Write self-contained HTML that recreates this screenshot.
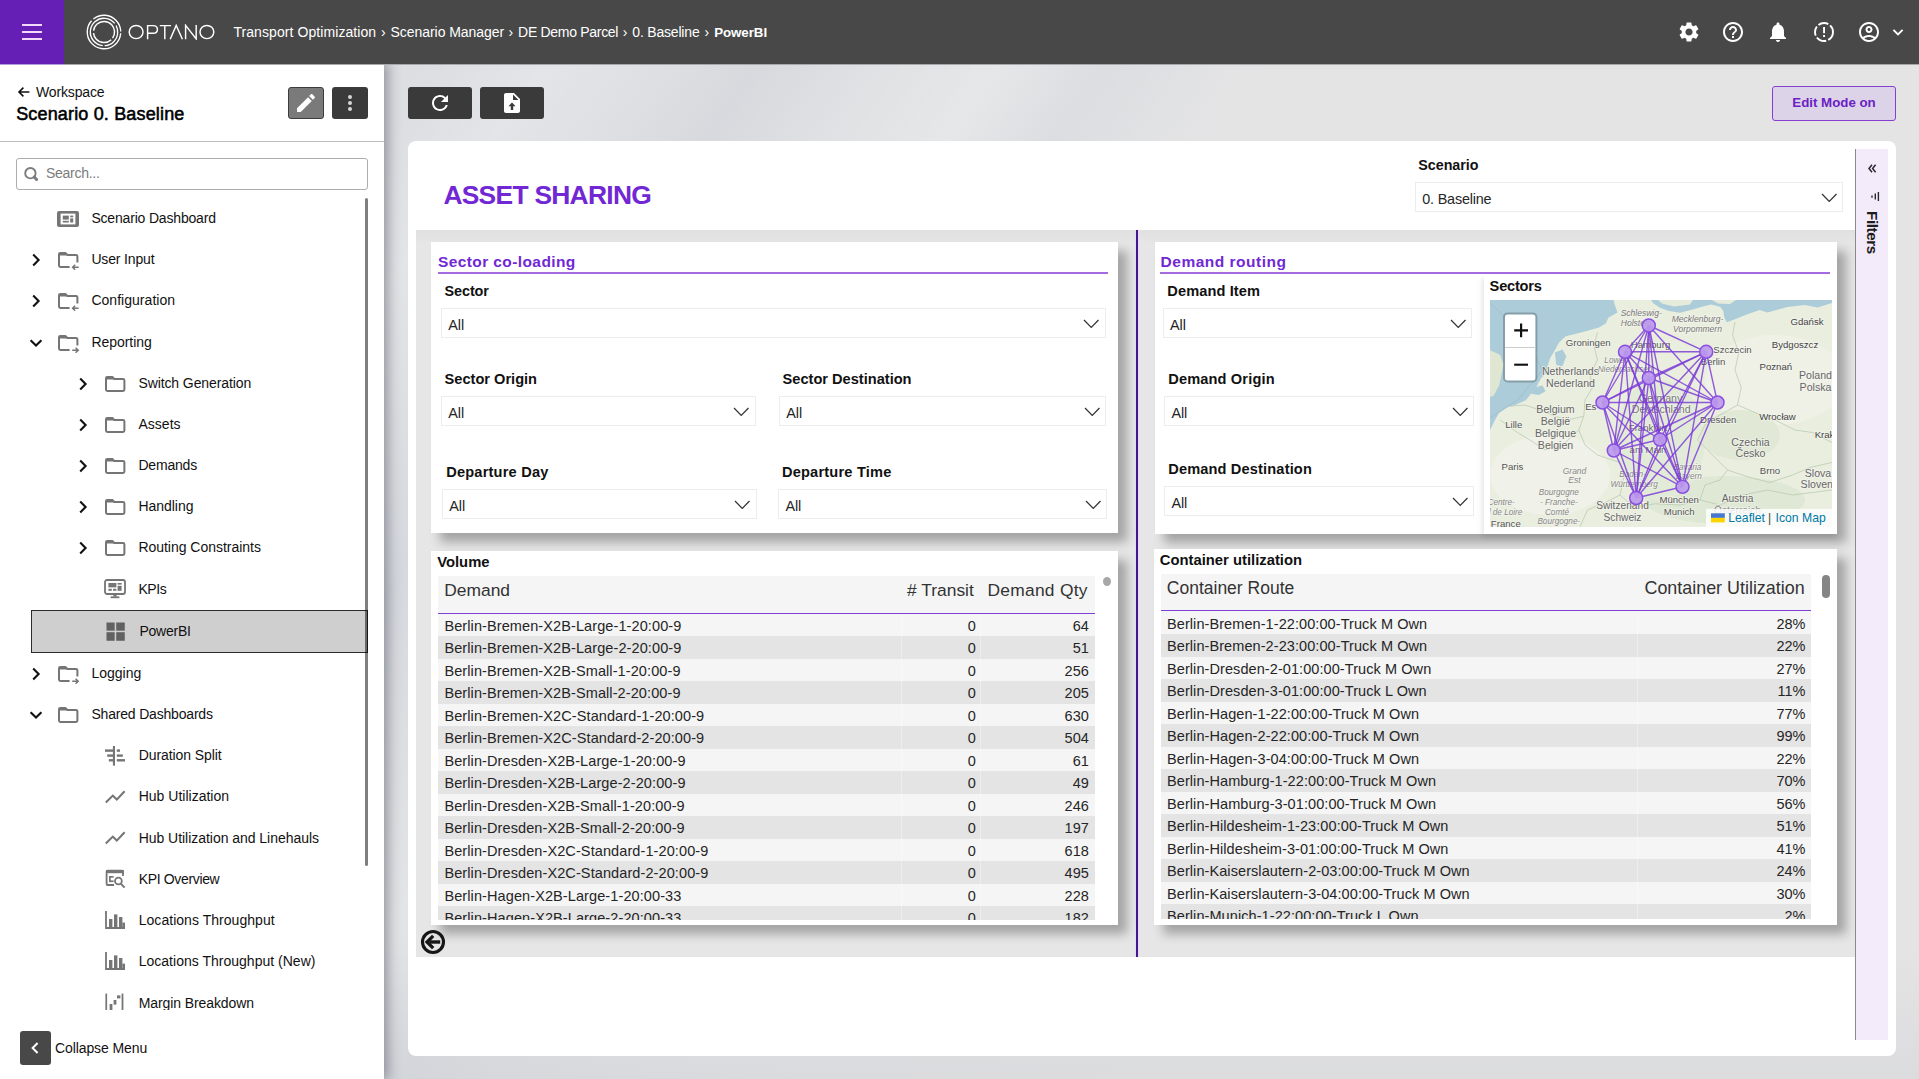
<!DOCTYPE html>
<html>
<head>
<meta charset="utf-8">
<title>OPTANO</title>
<style>
*{box-sizing:border-box;margin:0;padding:0}
html,body{width:1919px;height:1079px;overflow:hidden}
body{font-family:"Liberation Sans",sans-serif;position:relative;color:#000;background:linear-gradient(125deg,transparent 18%,rgba(255,255,255,.18) 22%,transparent 26%,rgba(200,205,212,.38) 30%,transparent 35%,rgba(255,255,255,.16) 39%,rgba(204,208,214,.3) 43%,transparent 48%,transparent 100%),linear-gradient(180deg,rgba(0,0,0,0) 0,rgba(0,0,0,0) 88%,rgba(120,125,140,.08) 100%),linear-gradient(100deg,#dcdee2 20%,#e1e2e4 42%,#e4e4e5 62%)}
.abs{position:absolute}
#topbar{left:0;top:0;width:1919px;height:64px;background:#484848}
#burger{left:0;top:0;width:64px;height:64px;background:#651fb5}
#burger i{position:absolute;left:22px;width:20px;height:2px;background:#f3d9ff}
#crumbs{left:233px;top:23px;font-size:14px;letter-spacing:.04px;color:#fff;white-space:nowrap;line-height:18px}
#sidebar{left:0;top:64px;width:384px;height:1015px;background:#fff;box-shadow:2px 0 12px 2px rgba(40,45,60,.42);clip-path:inset(0 -40px 0 0)}
#sbhead{left:0;top:0;width:384px;height:78px;border-bottom:1px solid #bdbdbd}
#tree{left:0;top:0;width:384px;height:1015px;font-size:14px;letter-spacing:-.1px;color:#111;white-space:nowrap}
#tree .t{line-height:18px}
#card{left:408px;top:141px;width:1488px;height:915px;background:#fff;border-radius:8px}
.btn{background:#3a3a3a;border-radius:3px}
.panel{background:#fff;box-shadow:9px 9px 10px rgba(0,0,0,.29)}
.ptitle{color:#7128d4;font-weight:700;font-size:15.5px;letter-spacing:.3px;white-space:nowrap;line-height:18px}
.lbl{font-weight:700;font-size:14.3px;color:#111;white-space:nowrap;line-height:18px}
.dd{border:1px solid #e8e8e8;background:#fff;font-size:14.6px;color:#222;height:30px;line-height:33px;padding-left:6.5px;white-space:nowrap}
.dd svg{position:absolute;right:6.5px;top:11px}
.tbl{font-size:14.5px;letter-spacing:.1px;color:#222;white-space:nowrap;overflow:hidden}
.tbl .r{position:absolute;left:0;height:22.5px;line-height:23px;width:100%}
.tbl .r span{position:absolute;top:0}
.tbl .h{position:absolute;left:0;top:0;width:100%;background:#f5f5f5;color:#333}
.tbl .h span{position:absolute;white-space:nowrap}
</style>
</head>
<body>

<!-- TOPBAR -->
<div id="topbar" class="abs"></div>
<div id="burger" class="abs"><i style="top:24px"></i><i style="top:31px"></i><i style="top:38px"></i></div>
<svg class="abs" style="left:83.9px;top:11.900px" width="40" height="40" viewBox="0 0 40 40" fill="none" stroke="#fff" stroke-width="1.350">
<circle cx="20" cy="20" r="16.750" stroke-dasharray="63.250 2.500 36.950 2.500" transform="rotate(4.300 20 20)"/>
<circle cx="20" cy="20" r="13.700" stroke-dasharray="53.700 2.500 27.400 2.500" transform="rotate(95.200 20 20)"/>
<circle cx="20" cy="20" r="10.550" stroke-width="1.450" stroke-dasharray="23.300 2.500 38 2.500" transform="rotate(46.800 20 20)"/>
</svg>
<svg class="abs" style="left:128px;top:24px" width="88" height="16" viewBox="0 0 88 16" fill="none" stroke="#fff" stroke-width="1.450">
<ellipse cx="8.100" cy="8" rx="6.900" ry="6.600"/>
<path d="M19.600 15.200 V1.600 H25 Q29.400 1.600 29.400 5.400 Q29.400 9.200 25 9.200 H19.600"/>
<path d="M31.800 1.600 H43 M36.800 1.600 V15.200"/>
<path d="M42.200 15.200 L48.200 1.400 L54.400 15.200"/>
<path d="M57.600 15.200 V1.400 L68.200 14.900 V0.900"/>
<ellipse cx="78.900" cy="8" rx="6.900" ry="6.600"/>
</svg>
<div id="crumbs" class="abs"><span class="abs" style="left:0.4px;top:0;letter-spacing:0.08px;">Transport Optimization</span><span class="abs" style="left:148.0px;top:0;letter-spacing:0px;">›</span><span class="abs" style="left:157.6px;top:0;letter-spacing:-0.06px;">Scenario Manager</span><span class="abs" style="left:275.5px;top:0;letter-spacing:0px;">›</span><span class="abs" style="left:285.1px;top:0;letter-spacing:-0.3px;">DE Demo Parcel</span><span class="abs" style="left:389.7px;top:0;letter-spacing:0px;">›</span><span class="abs" style="left:399.3px;top:0;letter-spacing:-0.19px;">0. Baseline</span><span class="abs" style="left:471.6px;top:0;letter-spacing:0px;">›</span><span class="abs" style="left:481.2px;top:0;letter-spacing:-0.05px;font-weight:700;font-size:13.3px;top:.5px">PowerBI</span></div>

<!-- SIDEBAR -->
<div id="sidebar" class="abs">
  <div id="sbhead" class="abs"></div>
  <svg class="abs" style="left:17px;top:22px" width="14" height="12" viewBox="0 0 14 12"><path d="M12.4 6 H2.4 M6.4 1.6 L2 6 L6.4 10.4" fill="none" stroke="#111" stroke-width="1.6"/></svg>
  <div class="abs" style="left:36px;top:19px;font-size:14px;letter-spacing:-.15px;line-height:18px;color:#111">Workspace</div>
  <div class="abs" style="left:16.2px;top:39px;font-size:18px;font-weight:400;letter-spacing:.16px;-webkit-text-stroke:.55px #000;line-height:22px;color:#000;white-space:nowrap">Scenario 0. Baseline</div>
  <div class="abs" style="left:288px;top:23px;width:36px;height:32px;background:#7a7a7a;border:1px solid #3c3c3c;border-radius:3px"></div>
  <svg class="abs" style="left:294px;top:27px" width="24" height="24" viewBox="0 0 24 24"><path fill="#fff" d="M3 17.25V21h3.75L17.81 9.94l-3.75-3.75L3 17.25zM20.71 7.04c.39-.39.39-1.02 0-1.41l-2.34-2.34c-.39-.39-1.02-.39-1.41 0l-1.83 1.83 3.75 3.75 1.83-1.83z"/></svg>
  <div class="abs btn" style="left:332px;top:23px;width:36px;height:32px"></div>
  <svg class="abs" style="left:338px;top:27px" width="24" height="24" viewBox="0 0 24 24"><circle cx="12" cy="6" r="2" fill="#d6d6d6"/><circle cx="12" cy="12" r="2" fill="#d6d6d6"/><circle cx="12" cy="18" r="2" fill="#d6d6d6"/></svg>
  <div class="abs" style="left:16px;top:94px;width:352px;height:32px;border:1px solid #adadad;border-radius:3px"></div>
  <svg class="abs" style="left:23px;top:102px" width="17" height="17" viewBox="0 0 17 17"><circle cx="7.4" cy="7.2" r="5.2" fill="none" stroke="#7c7c7c" stroke-width="1.9"/><path d="M11.2 11 L13.6 13.5" stroke="#7c7c7c" stroke-width="3" stroke-linecap="round"/></svg>
  <div class="abs" style="left:46px;top:100px;font-size:14px;letter-spacing:-.28px;color:#7b7b7b;line-height:18px">Search...</div>
  <div class="abs" style="left:365px;top:134px;width:3px;height:668px;background:rgba(0,0,0,.5);border-radius:1.5px;z-index:5"></div>
  <div id="tree" class="abs">
<div class="abs" style="left:31px;top:546px;width:337px;height:43px;background:#cfcfcf;border:1px solid #2c2c2c"></div>
<svg class="abs" style="left:57px;top:146.5px" width="22" height="16" viewBox="0 0 22 16"><rect x="0" y="0" width="22" height="16" rx="2" fill="#757575"/><rect x="3.6" y="2.6" width="14.8" height="10.8" fill="#fff"/><rect x="5.8" y="4.6" width="6" height="4" fill="#757575"/><rect x="5.8" y="9.8" width="6" height="1.7" fill="#757575"/><rect x="13.2" y="4.6" width="3" height="1.7" fill="#757575"/><rect x="13.2" y="7.4" width="3" height="4.1" fill="#757575"/></svg>
<div class="abs t" style="left:91.4px;top:145.15px;letter-spacing:-0.18px">Scenario Dashboard</div>
<svg class="abs" style="left:30px;top:188.0px" width="12" height="16" viewBox="0 0 12 16"><path d="M3.2 2.6 L8.6 8 L3.2 13.4" fill="none" stroke="#111" stroke-width="2.1"/></svg>
<svg class="abs" style="left:58px;top:187.0px" width="22" height="19" viewBox="0 0 22 19"><path d="M11.6 16 H2.4 Q1 16 1 14.6 V3.3 Q1 2 2.3 2 H7.4 L9.4 3.9 H18 Q19.4 3.9 19.4 5.3 V11.4" fill="none" stroke="#757575" stroke-width="2" stroke-linejoin="round"/><path d="M1 2.4 H7.8 L9.6 4.4 H1Z" fill="#757575"/><path d="M20.6 16.2 H14.8 M17.2 13.700 L14.600 16.2 L17.2 18.700" fill="none" stroke="#757575" stroke-width="1.5"/></svg>
<div class="abs t" style="left:91.4px;top:186.15px;letter-spacing:-0.149px">User Input</div>
<svg class="abs" style="left:30px;top:229.10000000000002px" width="12" height="16" viewBox="0 0 12 16"><path d="M3.2 2.6 L8.6 8 L3.2 13.4" fill="none" stroke="#111" stroke-width="2.1"/></svg>
<svg class="abs" style="left:58px;top:228.10000000000002px" width="22" height="19" viewBox="0 0 22 19"><path d="M11.6 16 H2.4 Q1 16 1 14.6 V3.3 Q1 2 2.3 2 H7.4 L9.4 3.9 H18 Q19.4 3.9 19.4 5.3 V11.4" fill="none" stroke="#757575" stroke-width="2" stroke-linejoin="round"/><path d="M1 2.4 H7.8 L9.6 4.4 H1Z" fill="#757575"/><path d="M20.6 16.2 H14.8 M17.2 13.700 L14.600 16.2 L17.2 18.700" fill="none" stroke="#757575" stroke-width="1.5"/></svg>
<div class="abs t" style="left:91.4px;top:227.15px;letter-spacing:0.032px">Configuration</div>
<svg class="abs" style="left:28px;top:272.5px" width="16" height="12" viewBox="0 0 16 12"><path d="M2.6 3.2 L8 8.6 L13.4 3.2" fill="none" stroke="#111" stroke-width="2.1"/></svg>
<svg class="abs" style="left:58px;top:269.5px" width="22" height="19" viewBox="0 0 22 19"><path d="M11.6 16 H2.4 Q1 16 1 14.6 V3.3 Q1 2 2.3 2 H7.4 L9.4 3.9 H18 Q19.4 3.9 19.4 5.3 V11.4" fill="none" stroke="#757575" stroke-width="2" stroke-linejoin="round"/><path d="M1 2.4 H7.8 L9.6 4.4 H1Z" fill="#757575"/><path d="M14.2 16.2 H20 M17.600 13.700 L20.2 16.2 L17.600 18.700" fill="none" stroke="#757575" stroke-width="1.5"/></svg>
<div class="abs t" style="left:91.4px;top:268.55px;letter-spacing:-0.034px">Reporting</div>
<svg class="abs" style="left:77px;top:311.5px" width="12" height="16" viewBox="0 0 12 16"><path d="M3.2 2.6 L8.6 8 L3.2 13.4" fill="none" stroke="#111" stroke-width="2.1"/></svg>
<svg class="abs" style="left:105px;top:310.5px" width="22" height="19" viewBox="0 0 22 19"><path d="M1 3.3 Q1 2 2.3 2 H7.4 L9.4 3.9 H18 Q19.4 3.9 19.4 5.3 V14.6 Q19.4 16 18 16 H2.4 Q1 16 1 14.6 Z" fill="none" stroke="#757575" stroke-width="2" stroke-linejoin="round"/><path d="M1 2.4 H7.8 L9.6 4.4 H1Z" fill="#757575"/></svg>
<div class="abs t" style="left:138.4px;top:309.75px;letter-spacing:-0.094px">Switch Generation</div>
<svg class="abs" style="left:77px;top:352.5px" width="12" height="16" viewBox="0 0 12 16"><path d="M3.2 2.6 L8.6 8 L3.2 13.4" fill="none" stroke="#111" stroke-width="2.1"/></svg>
<svg class="abs" style="left:105px;top:351.5px" width="22" height="19" viewBox="0 0 22 19"><path d="M1 3.3 Q1 2 2.3 2 H7.4 L9.4 3.9 H18 Q19.4 3.9 19.4 5.3 V14.6 Q19.4 16 18 16 H2.4 Q1 16 1 14.6 Z" fill="none" stroke="#757575" stroke-width="2" stroke-linejoin="round"/><path d="M1 2.4 H7.8 L9.6 4.4 H1Z" fill="#757575"/></svg>
<div class="abs t" style="left:138.4px;top:350.95px;letter-spacing:0.031px">Assets</div>
<svg class="abs" style="left:77px;top:393.5px" width="12" height="16" viewBox="0 0 12 16"><path d="M3.2 2.6 L8.6 8 L3.2 13.4" fill="none" stroke="#111" stroke-width="2.1"/></svg>
<svg class="abs" style="left:105px;top:392.5px" width="22" height="19" viewBox="0 0 22 19"><path d="M1 3.3 Q1 2 2.3 2 H7.4 L9.4 3.9 H18 Q19.4 3.9 19.4 5.3 V14.6 Q19.4 16 18 16 H2.4 Q1 16 1 14.6 Z" fill="none" stroke="#757575" stroke-width="2" stroke-linejoin="round"/><path d="M1 2.4 H7.8 L9.6 4.4 H1Z" fill="#757575"/></svg>
<div class="abs t" style="left:138.4px;top:392.15px;letter-spacing:-0.189px">Demands</div>
<svg class="abs" style="left:77px;top:434.5px" width="12" height="16" viewBox="0 0 12 16"><path d="M3.2 2.6 L8.6 8 L3.2 13.4" fill="none" stroke="#111" stroke-width="2.1"/></svg>
<svg class="abs" style="left:105px;top:433.5px" width="22" height="19" viewBox="0 0 22 19"><path d="M1 3.3 Q1 2 2.3 2 H7.4 L9.4 3.9 H18 Q19.4 3.9 19.4 5.3 V14.6 Q19.4 16 18 16 H2.4 Q1 16 1 14.6 Z" fill="none" stroke="#757575" stroke-width="2" stroke-linejoin="round"/><path d="M1 2.4 H7.8 L9.6 4.4 H1Z" fill="#757575"/></svg>
<div class="abs t" style="left:138.4px;top:433.25px;letter-spacing:-0.033px">Handling</div>
<svg class="abs" style="left:77px;top:475.5px" width="12" height="16" viewBox="0 0 12 16"><path d="M3.2 2.6 L8.6 8 L3.2 13.4" fill="none" stroke="#111" stroke-width="2.1"/></svg>
<svg class="abs" style="left:105px;top:474.5px" width="22" height="19" viewBox="0 0 22 19"><path d="M1 3.3 Q1 2 2.3 2 H7.4 L9.4 3.9 H18 Q19.4 3.9 19.4 5.3 V14.6 Q19.4 16 18 16 H2.4 Q1 16 1 14.6 Z" fill="none" stroke="#757575" stroke-width="2" stroke-linejoin="round"/><path d="M1 2.4 H7.8 L9.6 4.4 H1Z" fill="#757575"/></svg>
<div class="abs t" style="left:138.4px;top:474.35px;letter-spacing:-0.024px">Routing Constraints</div>
<svg class="abs" style="left:104px;top:515px" width="22" height="20" viewBox="0 0 22 20"><rect x="1" y="1" width="20" height="14" rx="2" fill="none" stroke="#757575" stroke-width="1.8"/><rect x="4.4" y="4" width="8" height="4.4" fill="#757575"/><rect x="13.6" y="4" width="4" height="1.6" fill="#757575"/><rect x="13.6" y="6.8" width="4" height="5" fill="#757575"/><rect x="4.4" y="9.8" width="3.4" height="2" fill="#757575"/><rect x="9" y="9.8" width="3.4" height="2" fill="#757575"/><rect x="9.4" y="15" width="3.2" height="2.6" fill="#757575"/><rect x="6.6" y="17.4" width="8.8" height="1.8" fill="#757575"/></svg>
<div class="abs t" style="left:138.4px;top:515.75px;letter-spacing:-0.37px">KPIs</div>
<svg class="abs" style="left:105.9px;top:557.8px" width="19.4" height="19.4" viewBox="0 0 19 19"><rect x="0.5" y="0.5" width="8" height="8" fill="#616161"/><rect x="10" y="0.5" width="8.4" height="8" fill="#616161"/><rect x="0.5" y="10" width="8" height="8.4" fill="#616161"/><rect x="10" y="10" width="8.4" height="8.4" fill="#616161"/></svg>
<div class="abs t" style="left:139.5px;top:557.95px;letter-spacing:-0.26px">PowerBI</div>
<svg class="abs" style="left:30px;top:601.5px" width="12" height="16" viewBox="0 0 12 16"><path d="M3.2 2.6 L8.6 8 L3.2 13.4" fill="none" stroke="#111" stroke-width="2.1"/></svg>
<svg class="abs" style="left:58px;top:600.5px" width="22" height="19" viewBox="0 0 22 19"><path d="M11.6 16 H2.4 Q1 16 1 14.6 V3.3 Q1 2 2.3 2 H7.4 L9.4 3.9 H18 Q19.4 3.9 19.4 5.3 V11.4" fill="none" stroke="#757575" stroke-width="2" stroke-linejoin="round"/><path d="M1 2.4 H7.8 L9.6 4.4 H1Z" fill="#757575"/><path d="M14.2 16.2 H20 M17.600 13.700 L20.2 16.2 L17.600 18.700" fill="none" stroke="#757575" stroke-width="1.5"/></svg>
<div class="abs t" style="left:91.4px;top:599.65px;letter-spacing:-0.004px">Logging</div>
<svg class="abs" style="left:28px;top:644.5px" width="16" height="12" viewBox="0 0 16 12"><path d="M2.6 3.2 L8 8.6 L13.4 3.2" fill="none" stroke="#111" stroke-width="2.1"/></svg>
<svg class="abs" style="left:58px;top:641.5px" width="22" height="19" viewBox="0 0 22 19"><path d="M1 3.3 Q1 2 2.3 2 H7.4 L9.4 3.9 H18 Q19.4 3.9 19.4 5.3 V14.6 Q19.4 16 18 16 H2.4 Q1 16 1 14.6 Z" fill="none" stroke="#757575" stroke-width="2" stroke-linejoin="round"/><path d="M1 2.4 H7.8 L9.6 4.4 H1Z" fill="#757575"/></svg>
<div class="abs t" style="left:91.4px;top:640.85px;letter-spacing:-0.184px">Shared Dashboards</div>
<svg class="abs" style="left:105px;top:681.8px" width="21" height="20" viewBox="0 0 21 20"><rect x="7.9" y="0" width="2.1" height="19.6" fill="#757575"/><rect x="0" y="3.4" width="8" height="2.4" fill="#757575"/><rect x="11.8" y="3.4" width="3.2" height="2.4" fill="#757575"/><rect x="2.2" y="8.4" width="6" height="2.4" fill="#757575"/><rect x="11.8" y="8.4" width="6" height="2.4" fill="#757575"/><rect x="3.8" y="13.1" width="4.400" height="2.4" fill="#757575"/><rect x="11.8" y="13.1" width="8.2" height="2.4" fill="#757575"/></svg>
<div class="abs t" style="left:138.7px;top:681.95px;letter-spacing:-0.082px">Duration Split</div>
<svg class="abs" style="left:105px;top:726px" width="21" height="14" viewBox="0 0 21 14"><path d="M0.8 12.4 L7.8 5.6 L11.8 9.6 L19.6 1.2" fill="none" stroke="#757575" stroke-width="2.1"/></svg>
<div class="abs t" style="left:138.7px;top:723.45px;letter-spacing:0.009px">Hub Utilization</div>
<svg class="abs" style="left:105px;top:767px" width="21" height="14" viewBox="0 0 21 14"><path d="M0.8 12.4 L7.8 5.6 L11.8 9.6 L19.6 1.2" fill="none" stroke="#757575" stroke-width="2.1"/></svg>
<div class="abs t" style="left:138.7px;top:764.75px;letter-spacing:-0.036px">Hub Utilization and Linehauls</div>
<svg class="abs" style="left:105px;top:805px" width="21" height="20" viewBox="0 0 21 20"><path d="M18 7 V2.6 Q18 1.6 17 1.6 H2.6 Q1.6 1.6 1.6 2.6 V15 Q1.6 16 2.6 16 H9" fill="none" stroke="#757575" stroke-width="1.8"/><rect x="1" y="1" width="17.8" height="3.2" fill="#757575"/><rect x="4" y="7" width="4.6" height="1.7" fill="#757575"/><rect x="4" y="11.4" width="4.6" height="1.7" fill="#757575"/><rect x="4" y="7" width="1.7" height="6" fill="#757575"/><circle cx="13.4" cy="12" r="3.4" fill="none" stroke="#757575" stroke-width="1.8"/><path d="M15.8 14.6 L19.6 18.6" stroke="#757575" stroke-width="2"/></svg>
<div class="abs t" style="left:138.7px;top:805.95px;letter-spacing:-0.343px">KPI Overview</div>
<svg class="abs" style="left:105px;top:846px" width="21" height="20" viewBox="0 0 21 20"><path d="M1 1 V18 H20" fill="none" stroke="#757575" stroke-width="1.8"/><rect x="4" y="9" width="3.4" height="8.4" fill="#757575"/><rect x="9" y="4.4" width="3.4" height="13" fill="#757575"/><rect x="14" y="7" width="3.4" height="10.4" fill="#757575"/><rect x="17.4" y="12.6" width="2.6" height="5" fill="#757575"/></svg>
<div class="abs t" style="left:138.7px;top:847.15px;letter-spacing:0.041px">Locations Throughput</div>
<svg class="abs" style="left:105px;top:887px" width="21" height="20" viewBox="0 0 21 20"><path d="M1 1 V18 H20" fill="none" stroke="#757575" stroke-width="1.8"/><rect x="4" y="9" width="3.4" height="8.4" fill="#757575"/><rect x="9" y="4.4" width="3.4" height="13" fill="#757575"/><rect x="14" y="7" width="3.4" height="10.4" fill="#757575"/><rect x="17.4" y="12.6" width="2.6" height="5" fill="#757575"/></svg>
<div class="abs t" style="left:138.7px;top:888.45px;letter-spacing:0.015px">Locations Throughput (New)</div>
<svg class="abs" style="left:105px;top:929px" width="20" height="20" viewBox="0 0 20 20"><rect x="0.4" y="0.6" width="1.7" height="19" fill="#757575"/><rect x="16.6" y="0.6" width="1.8" height="19" fill="#757575"/><rect x="4.6" y="11" width="2.8" height="7" fill="#757575"/><rect x="8.6" y="7" width="2.8" height="4.6" fill="#757575"/><rect x="12" y="2.4" width="3.4" height="3" fill="#757575"/></svg>
<div class="abs t" style="left:138.7px;top:929.75px;letter-spacing:-0.09px">Margin Breakdown</div>
  </div>
  <div class="abs" style="left:0;top:945.5px;width:384px;height:70px;background:#fff"></div>
  <div class="abs" style="left:20px;top:967px;width:31px;height:34px;background:#484848;border-radius:3px"></div>
  <svg class="abs" style="left:29px;top:976px" width="12" height="16" viewBox="0 0 12 16"><path d="M8.6 3 L3.6 8 L8.6 13" fill="none" stroke="#fff" stroke-width="2"/></svg>
  <div class="abs" style="left:55px;top:975px;font-size:14px;letter-spacing:-.1px;line-height:18px;color:#111">Collapse Menu</div>
</div>

<!-- TOPBAR RIGHT ICONS -->
<svg class="abs" style="left:1677px;top:20px" width="24" height="24" viewBox="0 0 24 24"><path fill="#fff" d="M19.14 12.94c.04-.3.06-.61.06-.94 0-.32-.02-.64-.07-.94l2.03-1.58a.49.49 0 0 0 .12-.61l-1.92-3.32a.488.488 0 0 0-.59-.22l-2.39.96c-.5-.38-1.03-.7-1.62-.94l-.36-2.54a.484.484 0 0 0-.48-.41h-3.84c-.24 0-.43.17-.47.41l-.36 2.54c-.59.24-1.13.57-1.62.94l-2.39-.96c-.22-.08-.47 0-.59.22L2.74 8.87c-.12.21-.08.47.12.61l2.03 1.58c-.05.3-.09.63-.09.94s.02.64.07.94l-2.03 1.58a.49.49 0 0 0-.12.61l1.92 3.32c.12.22.37.29.59.22l2.39-.96c.5.38 1.03.7 1.62.94l.36 2.54c.05.24.24.41.48.41h3.84c.24 0 .44-.17.47-.41l.36-2.54c.59-.24 1.13-.56 1.62-.94l2.39.96c.22.08.47 0 .59-.22l1.92-3.32c.12-.22.07-.47-.12-.61l-2.01-1.58zM12 15.6c-1.98 0-3.6-1.62-3.6-3.600s1.62-3.600 3.600-3.600 3.600 1.620 3.600 3.600-1.620 3.600-3.600 3.600z"/></svg>
<svg class="abs" style="left:1721px;top:20px" width="24" height="24" viewBox="0 0 24 24"><path fill="#fff" d="M11 18h2v-2h-2v2zm1-16C6.480 2 2 6.480 2 12s4.480 10 10 10 10-4.480 10-10S17.520 2 12 2zm0 18c-4.410 0-8-3.590-8-8s3.590-8 8-8 8 3.590 8 8-3.590 8-8 8zm0-14c-2.210 0-4 1.790-4 4h2c0-1.100.9-2 2-2s2 .9 2 2c0 2-3 1.750-3 5h2c0-2.250 3-2.500 3-5 0-2.210-1.790-4-4-4z"/></svg>
<svg class="abs" style="left:1766px;top:20px" width="24" height="24" viewBox="0 0 24 24"><path fill="#fff" d="M12 22c1.100 0 2-.9 2-2h-4c0 1.100.89 2 2 2zm6-6v-5c0-3.070-1.640-5.640-4.500-6.320V4c0-.83-.67-1.500-1.500-1.500s-1.500.67-1.500 1.500v.68C7.630 5.360 6 7.920 6 11v5l-2 2v1h16v-1l-2-2z"/></svg>
<svg class="abs" style="left:1812px;top:20px" width="24" height="24" viewBox="0 0 24 24"><circle cx="12" cy="12" r="9" fill="none" stroke="#fff" stroke-width="1.9" stroke-dasharray="9.6 2.2 10.4 2.2 9.6 2.2 10.4 2.2 8 0"/><rect x="11.1" y="7" width="1.9" height="6.2" fill="#fff"/><rect x="11.1" y="15" width="1.9" height="2" fill="#fff"/></svg>
<svg class="abs" style="left:1857px;top:20px" width="24" height="24" viewBox="0 0 24 24"><path fill="#fff" d="M12 2C6.480 2 2 6.480 2 12s4.480 10 10 10 10-4.480 10-10S17.520 2 12 2zM7.350 18.500C8.660 17.560 10.260 17 12 17s3.340.56 4.650 1.500C15.340 19.440 13.740 20 12 20s-3.340-.56-4.650-1.500zm10.790-1.380C16.450 15.800 14.320 15 12 15s-4.450.8-6.140 2.120C4.700 15.730 4 13.950 4 12c0-4.420 3.580-8 8-8s8 3.580 8 8c0 1.950-.7 3.730-1.860 5.120zM12 6c-1.930 0-3.500 1.570-3.500 3.500S10.070 13 12 13s3.500-1.570 3.500-3.500S13.930 6 12 6zm0 5c-.83 0-1.500-.67-1.500-1.500S11.170 8 12 8s1.500.67 1.500 1.500S12.830 11 12 11z"/></svg>
<svg class="abs" style="left:1892px;top:28px" width="12" height="9" viewBox="0 0 12 9"><path d="M1.400 1.800 L6 6.400 L10.600 1.800" fill="none" stroke="#fff" stroke-width="1.9"/></svg>

<!-- MAIN TOOLBAR -->
<div class="abs btn" style="left:408px;top:87px;width:64px;height:32px"></div>
<svg class="abs" style="left:428px;top:91px" width="24" height="24" viewBox="0 0 24 24"><path fill="#fff" d="M17.650 6.350A7.958 7.958 0 0 0 12 4c-4.420 0-7.990 3.580-7.990 8s3.570 8 7.990 8c3.730 0 6.840-2.550 7.730-6h-2.080A5.990 5.990 0 0 1 12 18c-3.310 0-6-2.690-6-6s2.690-6 6-6c1.660 0 3.140.69 4.220 1.780L13 11h7V4l-2.350 2.350z"/></svg>
<div class="abs btn" style="left:480px;top:87px;width:64px;height:32px"></div>
<svg class="abs" style="left:500px;top:91px" width="24" height="24" viewBox="0 0 24 24"><path fill="#fff" d="M14 2H6c-1.100 0-1.990.9-1.990 2L4 20c0 1.100.89 2 1.990 2H18c1.100 0 2-.9 2-2V8l-6-6zm-1 7V3.500L18.500 9H13z"/><path fill="#3a3a3a" d="M12 11.500 L8.400 15.200 H10.800 V19 H13.200 V15.200 H15.600 Z"/></svg>
<div class="abs" style="left:1772px;top:86px;width:124px;height:35px;background:#ddd3e8;border:1.500px solid #8540d0;border-radius:3px"></div>
<div class="abs" style="left:1772px;top:94px;width:124px;text-align:center;font-size:13.300px;font-weight:700;color:#6a22c4;line-height:18px">Edit Mode on</div>

<!-- CARD -->
<div id="card" class="abs"></div>

<!-- TOPLINE --><div class="abs" style="left:64px;top:64px;width:1855px;height:1px;background:#a8a8ac;z-index:9"></div><div class="abs" style="left:0;top:64px;width:64px;height:1px;background:#b39bd6;z-index:9"></div>

<!-- REPORT A -->
<div class="abs" style="left:443.4px;top:177.75px;font-size:26.4px;font-weight:700;color:#7128d4;line-height:34px;letter-spacing:-0.72px;white-space:nowrap;">ASSET SHARING</div>
<div class="abs" style="left:1418.2px;top:155.55px;font-size:14.3px;font-weight:700;color:#111;line-height:19px;letter-spacing:0px;white-space:nowrap;">Scenario</div>
<div class="abs" style="left:1415.3px;top:181.9px;width:427.7px;height:30px;border:1px solid #ededed;background:#fff"></div>
<div class="abs" style="left:1422.3px;top:190.11px;font-size:14.4px;font-weight:400;color:#252525;line-height:19px;letter-spacing:-0.2px;white-space:nowrap;">0. Baseline</div>
<svg class="abs" style="left:1820.5px;top:192.9px" width="16.5" height="9.4" viewBox="-1 -1 16.5 9.4"><path d="M0 0 L7.25 7.4 L14.5 0" fill="none" stroke="#333" stroke-width="1.25"/></svg>
<div class="abs" style="left:416.2px;top:230.4px;width:1438.8px;height:726.6px;background:linear-gradient(#e0e0e0,#e6e6e6 14px,#e6e6e6)"></div>
<div class="abs" style="left:1135px;top:230.4px;width:4px;height:726.4px;background:#e6daf4"></div>
<div class="abs" style="left:1136px;top:230px;width:2px;height:727px;background:#47148f"></div>
<div class="abs" style="left:1855px;top:149px;width:33px;height:891px;background:#f3eafa;border-left:1px solid #8a8a8a"></div>
<svg class="abs" style="left:1868px;top:163.500px" width="9" height="9" viewBox="0 0 9 9"><path d="M4 0.800 L1 4.500 L4 8.200 M7.600 0.800 L4.600 4.500 L7.600 8.200" fill="none" stroke="#2a2a2a" stroke-width="1.500"/></svg>
<svg class="abs" style="left:1867px;top:191px" width="13" height="11" viewBox="0 0 13 11"><path d="M11.400 0.900 V10.100 M8.300 2.600 V8.600 M5 4.600 V6.800" fill="none" stroke="#2a2a2a" stroke-width="1.400"/></svg>
<div class="abs" style="left:1881px;top:211px;font-size:15.2px;font-weight:700;color:#1d1d1d;line-height:17px;transform:rotate(90deg);transform-origin:0 0;white-space:nowrap;letter-spacing:-.4px">Filters</div>
<div class="abs panel" style="left:431px;top:242px;width:687px;height:291px"></div>
<div class="abs" style="left:438px;top:251.53px;font-size:15.5px;font-weight:700;color:#7128d4;line-height:20px;letter-spacing:0.4px;white-space:nowrap;">Sector co-loading</div>
<div class="abs" style="left:438px;top:271.8px;width:670px;height:2px;background:#a56be0"></div>
<div class="abs" style="left:444.6px;top:282.01px;font-size:14.4px;font-weight:700;color:#111;line-height:19px;letter-spacing:-0.1px;white-space:nowrap;">Sector</div>
<div class="abs" style="left:441.3px;top:308px;width:664.3px;height:30px;border:1px solid #ededed;background:#fff"></div>
<div class="abs" style="left:448.3px;top:315.51px;font-size:14.4px;font-weight:400;color:#252525;line-height:19px;letter-spacing:-0.05px;white-space:nowrap;">All</div>
<svg class="abs" style="left:1083.1px;top:319px" width="16.5" height="9.4" viewBox="-1 -1 16.5 9.4"><path d="M0 0 L7.25 7.4 L14.5 0" fill="none" stroke="#333" stroke-width="1.25"/></svg>
<div class="abs" style="left:444.6px;top:370.14px;font-size:14.6px;font-weight:700;color:#111;line-height:19px;letter-spacing:0px;white-space:nowrap;">Sector Origin</div>
<div class="abs" style="left:441.3px;top:395.6px;width:314.6px;height:30px;border:1px solid #ededed;background:#fff"></div>
<div class="abs" style="left:448.3px;top:404.01px;font-size:14.4px;font-weight:400;color:#252525;line-height:19px;letter-spacing:-0.05px;white-space:nowrap;">All</div>
<svg class="abs" style="left:733.4000000000001px;top:406.6px" width="16.5" height="9.4" viewBox="-1 -1 16.5 9.4"><path d="M0 0 L7.25 7.4 L14.5 0" fill="none" stroke="#333" stroke-width="1.25"/></svg>
<div class="abs" style="left:782.6px;top:370.14px;font-size:14.6px;font-weight:700;color:#111;line-height:19px;letter-spacing:0px;white-space:nowrap;">Sector Destination</div>
<div class="abs" style="left:779.3px;top:395.6px;width:327.2px;height:30px;border:1px solid #ededed;background:#fff"></div>
<div class="abs" style="left:786.3px;top:404.01px;font-size:14.4px;font-weight:400;color:#252525;line-height:19px;letter-spacing:-0.05px;white-space:nowrap;">All</div>
<svg class="abs" style="left:1084.0px;top:406.6px" width="16.5" height="9.4" viewBox="-1 -1 16.5 9.4"><path d="M0 0 L7.25 7.4 L14.5 0" fill="none" stroke="#333" stroke-width="1.25"/></svg>
<div class="abs" style="left:446.2px;top:462.74px;font-size:14.6px;font-weight:700;color:#111;line-height:19px;letter-spacing:0.2px;white-space:nowrap;">Departure Day</div>
<div class="abs" style="left:442.2px;top:489px;width:314.6px;height:30px;border:1px solid #ededed;background:#fff"></div>
<div class="abs" style="left:449.2px;top:496.51px;font-size:14.4px;font-weight:400;color:#252525;line-height:19px;letter-spacing:-0.05px;white-space:nowrap;">All</div>
<svg class="abs" style="left:734.3px;top:500px" width="16.5" height="9.4" viewBox="-1 -1 16.5 9.4"><path d="M0 0 L7.25 7.4 L14.5 0" fill="none" stroke="#333" stroke-width="1.25"/></svg>
<div class="abs" style="left:781.9px;top:462.74px;font-size:14.6px;font-weight:700;color:#111;line-height:19px;letter-spacing:0.2px;white-space:nowrap;">Departure Time</div>
<div class="abs" style="left:778.4px;top:489px;width:329px;height:30px;border:1px solid #ededed;background:#fff"></div>
<div class="abs" style="left:785.4px;top:496.51px;font-size:14.4px;font-weight:400;color:#252525;line-height:19px;letter-spacing:-0.05px;white-space:nowrap;">All</div>
<svg class="abs" style="left:1084.9px;top:500px" width="16.5" height="9.4" viewBox="-1 -1 16.5 9.4"><path d="M0 0 L7.25 7.4 L14.5 0" fill="none" stroke="#333" stroke-width="1.25"/></svg>
<div class="abs panel" style="left:1155px;top:242px;width:682px;height:291.5px"></div>
<div class="abs" style="left:1160.6px;top:251.53px;font-size:15.5px;font-weight:700;color:#7128d4;line-height:20px;letter-spacing:0.5px;white-space:nowrap;">Demand routing</div>
<div class="abs" style="left:1160px;top:271.8px;width:670px;height:2px;background:#a56be0"></div>
<div class="abs" style="left:1167.3px;top:281.94px;font-size:14.6px;font-weight:700;color:#111;line-height:19px;letter-spacing:0.1px;white-space:nowrap;">Demand Item</div>
<div class="abs" style="left:1163px;top:308px;width:309px;height:30px;border:1px solid #ededed;background:#fff"></div>
<div class="abs" style="left:1170px;top:315.51px;font-size:14.4px;font-weight:400;color:#252525;line-height:19px;letter-spacing:-0.05px;white-space:nowrap;">All</div>
<svg class="abs" style="left:1449.5px;top:319px" width="16.5" height="9.4" viewBox="-1 -1 16.5 9.4"><path d="M0 0 L7.25 7.4 L14.5 0" fill="none" stroke="#333" stroke-width="1.25"/></svg>
<div class="abs" style="left:1168.2px;top:370.14px;font-size:14.6px;font-weight:700;color:#111;line-height:19px;letter-spacing:0.15px;white-space:nowrap;">Demand Origin</div>
<div class="abs" style="left:1164.4px;top:395.6px;width:309.6px;height:30px;border:1px solid #ededed;background:#fff"></div>
<div class="abs" style="left:1171.4px;top:404.01px;font-size:14.4px;font-weight:400;color:#252525;line-height:19px;letter-spacing:-0.05px;white-space:nowrap;">All</div>
<svg class="abs" style="left:1451.5px;top:406.6px" width="16.5" height="9.4" viewBox="-1 -1 16.5 9.4"><path d="M0 0 L7.25 7.4 L14.5 0" fill="none" stroke="#333" stroke-width="1.25"/></svg>
<div class="abs" style="left:1168.2px;top:460.04px;font-size:14.6px;font-weight:700;color:#111;line-height:19px;letter-spacing:0.15px;white-space:nowrap;">Demand Destination</div>
<div class="abs" style="left:1164.4px;top:486.2px;width:309.6px;height:30px;border:1px solid #ededed;background:#fff"></div>
<div class="abs" style="left:1171.4px;top:494.01px;font-size:14.4px;font-weight:400;color:#252525;line-height:19px;letter-spacing:-0.05px;white-space:nowrap;">All</div>
<svg class="abs" style="left:1451.5px;top:497.2px" width="16.5" height="9.4" viewBox="-1 -1 16.5 9.4"><path d="M0 0 L7.25 7.4 L14.5 0" fill="none" stroke="#333" stroke-width="1.25"/></svg>

<!-- MAP -->
<div class="abs" style="left:1484px;top:275px;width:353px;height:258.5px;background:#fff;box-shadow:-2px 3px 5px rgba(0,0,0,.10)"></div>
<div class="abs" style="left:1489.6px;top:276.74px;font-size:14.6px;font-weight:700;line-height:19px;color:#111;letter-spacing:-.2px">Sectors</div>
<svg class="abs" style="left:1490px;top:300px" width="342" height="227" viewBox="0 0 342 227" font-family="Liberation Sans, sans-serif"><rect width="342" height="227" fill="#eaeedf"/><ellipse cx="285" cy="80" rx="70" ry="45" fill="#f0f1e6"/><ellipse cx="60" cy="175" rx="60" ry="40" fill="#f0f1e8"/><ellipse cx="235" cy="200" rx="80" ry="24" fill="#dfe8d5"/><ellipse cx="170" cy="140" rx="45" ry="60" fill="#e2ead8"/><ellipse cx="250" cy="135" rx="40" ry="25" fill="#e1e9d6"/><polygon points="0.0,0.0 123.5,0.0 124.8,4.8 127.5,12.5 118.5,17.5 115.8,23.5 109.0,27.5 95.8,31.2 87.0,33.5 75.8,36.2 69.0,42.5 64.8,50.2 60.2,58.0 58.0,64.8 55.8,73.5 51.2,78.0 47.0,85.8 41.2,93.5 35.8,100.2 25.8,104.8 18.0,107.0 9.0,113.0 5.0,120.0 0.0,130.0" fill="#abccd8"/><polygon points="0.0,50.2 10.2,54.8 13.5,64.8 11.2,75.8 9.0,85.8 3.5,95.8 0.0,97.0" fill="#dfe7d3"/><polygon points="65.0,52.5 72.5,49.5 76.2,56.2 72.5,66.2 66.2,65.0" fill="#abccd8"/><polygon points="43.8,87.5 52.5,85.5 55.5,91.2 48.8,95.0 41.2,93.8" fill="#abccd8"/><polygon points="161,0 163.3,3.3 170,7.8 178.9,11.1 190,12.8 201,10 212,6.7 221,4.4 230,6.7 233.3,11.1 234.4,17.8 236.7,22.2 245.6,18.9 256.7,14.4 269.8,10 277.5,12.5 297.5,7 315,5 327.5,7.5 342,3 342,0" fill="#abccd8"/><polygon points="168,0 203,0 200,4.5 184,6.5 172,3.5" fill="#e6ebdc"/><polygon points="222,0 246,0 240,4 228,3.5" fill="#e6ebdc"/><polyline points="107.5,32.5 103.8,45.0 107.5,60.0 100.0,75.0 102.5,87.5 95.0,100.0 93.8,116.2 88.8,130.0 95.0,145.0 107.5,155.0 130.0,162.5 133.8,177.5 130.0,195.0 140.0,203.8" fill="none" stroke="#b5c6ae" stroke-width="0.7"/><polyline points="245.0,22.0 242.5,35.0 248.8,52.5 245.0,70.0 251.2,87.5 247.5,105.0 230.0,115.0 215.0,125.0 207.5,140.0 222.5,155.0 237.5,170.0 230.0,180.0 215.0,185.0 210.0,200.0 190.0,205.0 165.0,203.8 150.0,206.2 140.0,203.8" fill="none" stroke="#b5c6ae" stroke-width="0.7"/><polyline points="247.5,105.0 265.0,112.5 285.0,120.0 305.0,130.0 322.5,132.5 342.0,142.5" fill="none" stroke="#b5c6ae" stroke-width="0.7"/><polyline points="237.5,170.0 260.0,177.5 280.0,182.5 302.5,175.0 320.0,167.5 342.0,162.5" fill="none" stroke="#b5c6ae" stroke-width="0.7"/><polyline points="93.8,116.2 77.5,120.0 65.0,116.2 50.0,110.0 35.0,105.0 20.0,106.2" fill="none" stroke="#b5c6ae" stroke-width="0.7"/><polyline points="88.8,130.0 72.5,145.0 55.0,150.0 40.0,140.0 27.5,132.5 10.0,120.0" fill="none" stroke="#b5c6ae" stroke-width="0.7"/><polyline points="0.0,2.5 35.0,37.5 52.5,70.0 27.5,100.0 0.0,117.5" fill="none" stroke="#9fb9c6" stroke-width="0.6"/><polyline points="130.0,195.0 115.0,202.5 97.5,210.0 90.0,226.8" fill="none" stroke="#b5c6ae" stroke-width="0.7"/><polyline points="210.0,200.0 230.0,205.0 252.5,195.0 277.5,190.0 302.5,195.0 342.0,190.0" fill="none" stroke="#b5c6ae" stroke-width="0.7"/><text x="151.2" y="16.0" font-size="8.5" fill="#777" text-anchor="middle" font-style="italic" stroke="#f4f5ee" stroke-width="1.6" paint-order="stroke" stroke-opacity=".75">Schleswig-</text><text x="146.2" y="25.5" font-size="8.5" fill="#777" text-anchor="middle" font-style="italic" stroke="#f4f5ee" stroke-width="1.6" paint-order="stroke" stroke-opacity=".75">Holstein</text><text x="207.5" y="21.7" font-size="8.5" fill="#777" text-anchor="middle" font-style="italic" stroke="#f4f5ee" stroke-width="1.6" paint-order="stroke" stroke-opacity=".75">Mecklenburg-</text><text x="207.5" y="31.7" font-size="8.5" fill="#777" text-anchor="middle" font-style="italic" stroke="#f4f5ee" stroke-width="1.6" paint-order="stroke" stroke-opacity=".75">Vorpommern</text><text x="317.0" y="24.6" font-size="9.6" fill="#444" text-anchor="middle" stroke="#f4f5ee" stroke-width="1.6" paint-order="stroke" stroke-opacity=".75">Gdańsk</text><text x="98.2" y="45.9" font-size="9.6" fill="#555" text-anchor="middle" stroke="#f4f5ee" stroke-width="1.6" paint-order="stroke" stroke-opacity=".75">Groningen</text><text x="160.5" y="48.4" font-size="9.6" fill="#555" text-anchor="middle" stroke="#f4f5ee" stroke-width="1.6" paint-order="stroke" stroke-opacity=".75">Hamburg</text><text x="242.5" y="52.6" font-size="9.6" fill="#555" text-anchor="middle" stroke="#f4f5ee" stroke-width="1.6" paint-order="stroke" stroke-opacity=".75">Szczecin</text><text x="305.0" y="48.4" font-size="9.6" fill="#444" text-anchor="middle" stroke="#f4f5ee" stroke-width="1.6" paint-order="stroke" stroke-opacity=".75">Bydgoszcz</text><text x="223.0" y="65.1" font-size="9.6" fill="#555" text-anchor="middle" stroke="#f4f5ee" stroke-width="1.6" paint-order="stroke" stroke-opacity=".75">Berlin</text><text x="285.8" y="69.6" font-size="9.6" fill="#444" text-anchor="middle" stroke="#f4f5ee" stroke-width="1.6" paint-order="stroke" stroke-opacity=".75">Poznań</text><text x="80.5" y="75.0" font-size="10.6" fill="#666" text-anchor="middle" stroke="#f4f5ee" stroke-width="1.6" paint-order="stroke" stroke-opacity=".75">Netherlands</text><text x="80.5" y="86.7" font-size="10.6" fill="#666" text-anchor="middle" stroke="#f4f5ee" stroke-width="1.6" paint-order="stroke" stroke-opacity=".75">Nederland</text><text x="325.5" y="79.2" font-size="10.6" fill="#666" text-anchor="middle" stroke="#f4f5ee" stroke-width="1.6" paint-order="stroke" stroke-opacity=".75">Poland</text><text x="325.5" y="90.7" font-size="10.6" fill="#666" text-anchor="middle" stroke="#f4f5ee" stroke-width="1.6" paint-order="stroke" stroke-opacity=".75">Polska</text><text x="125.5" y="62.9" font-size="8.2" fill="#888" text-anchor="middle" font-style="italic" stroke="#f4f5ee" stroke-width="1.6" paint-order="stroke" stroke-opacity=".75">Lower</text><text x="135.0" y="72.4" font-size="8.2" fill="#888" text-anchor="middle" font-style="italic" stroke="#f4f5ee" stroke-width="1.6" paint-order="stroke" stroke-opacity=".75">Niedersachsen</text><text x="170.5" y="101.7" font-size="10.6" fill="#777" text-anchor="middle" stroke="#f4f5ee" stroke-width="1.6" paint-order="stroke" stroke-opacity=".75">Germany</text><text x="171.2" y="113.2" font-size="10.6" fill="#777" text-anchor="middle" stroke="#f4f5ee" stroke-width="1.6" paint-order="stroke" stroke-opacity=".75">Deutschland</text><text x="100.8" y="110.1" font-size="9.6" fill="#555" text-anchor="middle" stroke="#f4f5ee" stroke-width="1.6" paint-order="stroke" stroke-opacity=".75">Es</text><text x="65.5" y="113.2" font-size="10.6" fill="#666" text-anchor="middle" stroke="#f4f5ee" stroke-width="1.6" paint-order="stroke" stroke-opacity=".75">Belgium</text><text x="65.5" y="125.0" font-size="10.6" fill="#666" text-anchor="middle" stroke="#f4f5ee" stroke-width="1.6" paint-order="stroke" stroke-opacity=".75">België</text><text x="65.5" y="137.0" font-size="10.6" fill="#666" text-anchor="middle" stroke="#f4f5ee" stroke-width="1.6" paint-order="stroke" stroke-opacity=".75">Belgique</text><text x="65.5" y="148.7" font-size="10.6" fill="#666" text-anchor="middle" stroke="#f4f5ee" stroke-width="1.6" paint-order="stroke" stroke-opacity=".75">Belgien</text><text x="23.8" y="127.6" font-size="9.6" fill="#555" text-anchor="middle" stroke="#f4f5ee" stroke-width="1.6" paint-order="stroke" stroke-opacity=".75">Lille</text><text x="228.2" y="122.6" font-size="9.6" fill="#555" text-anchor="middle" stroke="#f4f5ee" stroke-width="1.6" paint-order="stroke" stroke-opacity=".75">Dresden</text><text x="287.5" y="120.1" font-size="9.6" fill="#444" text-anchor="middle" stroke="#f4f5ee" stroke-width="1.6" paint-order="stroke" stroke-opacity=".75">Wrocław</text><text x="158.0" y="131.4" font-size="9.6" fill="#666" text-anchor="middle" stroke="#f4f5ee" stroke-width="1.6" paint-order="stroke" stroke-opacity=".75">Frankfurt</text><text x="158.0" y="152.9" font-size="9.6" fill="#666" text-anchor="middle" stroke="#f4f5ee" stroke-width="1.6" paint-order="stroke" stroke-opacity=".75">am Main</text><text x="260.5" y="145.5" font-size="10.6" fill="#666" text-anchor="middle" stroke="#f4f5ee" stroke-width="1.6" paint-order="stroke" stroke-opacity=".75">Czechia</text><text x="260.5" y="157.0" font-size="10.6" fill="#666" text-anchor="middle" stroke="#f4f5ee" stroke-width="1.6" paint-order="stroke" stroke-opacity=".75">Česko</text><text x="334.5" y="137.6" font-size="9.6" fill="#444" text-anchor="middle" stroke="#f4f5ee" stroke-width="1.6" paint-order="stroke" stroke-opacity=".75">Krak</text><text x="22.5" y="169.6" font-size="9.6" fill="#555" text-anchor="middle" stroke="#f4f5ee" stroke-width="1.6" paint-order="stroke" stroke-opacity=".75">Paris</text><text x="84.5" y="173.5" font-size="8.5" fill="#888" text-anchor="middle" font-style="italic" stroke="#f4f5ee" stroke-width="1.6" paint-order="stroke" stroke-opacity=".75">Grand</text><text x="84.5" y="183.0" font-size="8.5" fill="#888" text-anchor="middle" font-style="italic" stroke="#f4f5ee" stroke-width="1.6" paint-order="stroke" stroke-opacity=".75">Est</text><text x="280.0" y="174.1" font-size="9.6" fill="#555" text-anchor="middle" stroke="#f4f5ee" stroke-width="1.6" paint-order="stroke" stroke-opacity=".75">Brno</text><text x="328.0" y="176.7" font-size="10.6" fill="#666" text-anchor="middle" stroke="#f4f5ee" stroke-width="1.6" paint-order="stroke" stroke-opacity=".75">Slova</text><text x="326.8" y="188.2" font-size="10.6" fill="#666" text-anchor="middle" stroke="#f4f5ee" stroke-width="1.6" paint-order="stroke" stroke-opacity=".75">Sloven</text><text x="197.5" y="169.6" font-size="8.2" fill="#888" text-anchor="middle" font-style="italic" stroke="#f4f5ee" stroke-width="1.6" paint-order="stroke" stroke-opacity=".75">Bavaria</text><text x="198.8" y="179.1" font-size="8.2" fill="#888" text-anchor="middle" font-style="italic" stroke="#f4f5ee" stroke-width="1.6" paint-order="stroke" stroke-opacity=".75">Bayern</text><text x="142.5" y="177.4" font-size="8.2" fill="#888" text-anchor="middle" font-style="italic" stroke="#f4f5ee" stroke-width="1.6" paint-order="stroke" stroke-opacity=".75">Baden-</text><text x="144.2" y="187.1" font-size="8.2" fill="#888" text-anchor="middle" font-style="italic" stroke="#f4f5ee" stroke-width="1.6" paint-order="stroke" stroke-opacity=".75">Württemberg</text><text x="68.8" y="195.4" font-size="8.2" fill="#888" text-anchor="middle" font-style="italic" stroke="#f4f5ee" stroke-width="1.6" paint-order="stroke" stroke-opacity=".75">Bourgogne</text><text x="68.8" y="205.4" font-size="8.2" fill="#888" text-anchor="middle" font-style="italic" stroke="#f4f5ee" stroke-width="1.6" paint-order="stroke" stroke-opacity=".75">- Franche-</text><text x="67.0" y="214.9" font-size="8.2" fill="#888" text-anchor="middle" font-style="italic" stroke="#f4f5ee" stroke-width="1.6" paint-order="stroke" stroke-opacity=".75">Comté</text><text x="68.8" y="224.1" font-size="8.2" fill="#888" text-anchor="middle" font-style="italic" stroke="#f4f5ee" stroke-width="1.6" paint-order="stroke" stroke-opacity=".75">Bourgogne-</text><text x="11.2" y="204.9" font-size="8.2" fill="#888" text-anchor="middle" font-style="italic" stroke="#f4f5ee" stroke-width="1.6" paint-order="stroke" stroke-opacity=".75">Centre-</text><text x="15.5" y="214.6" font-size="8.2" fill="#888" text-anchor="middle" font-style="italic" stroke="#f4f5ee" stroke-width="1.6" paint-order="stroke" stroke-opacity=".75">l de Loire</text><text x="15.8" y="226.6" font-size="9.6" fill="#555" text-anchor="middle" stroke="#f4f5ee" stroke-width="1.6" paint-order="stroke" stroke-opacity=".75">France</text><text x="132.5" y="208.6" font-size="10.2" fill="#666" text-anchor="middle" stroke="#f4f5ee" stroke-width="1.6" paint-order="stroke" stroke-opacity=".75">Switzerland</text><text x="132.5" y="221.1" font-size="10.2" fill="#666" text-anchor="middle" stroke="#f4f5ee" stroke-width="1.6" paint-order="stroke" stroke-opacity=".75">Schweiz</text><text x="189.2" y="203.4" font-size="9.6" fill="#555" text-anchor="middle" stroke="#f4f5ee" stroke-width="1.6" paint-order="stroke" stroke-opacity=".75">München</text><text x="189.2" y="214.6" font-size="9.6" fill="#555" text-anchor="middle" stroke="#f4f5ee" stroke-width="1.6" paint-order="stroke" stroke-opacity=".75">Munich</text><text x="247.5" y="202.3" font-size="10.2" fill="#666" text-anchor="middle" stroke="#f4f5ee" stroke-width="1.6" paint-order="stroke" stroke-opacity=".75">Austria</text><text x="247.5" y="214.1" font-size="10.2" fill="#888" text-anchor="middle" stroke="#f4f5ee" stroke-width="1.6" paint-order="stroke" stroke-opacity=".75">Österreich</text><line x1="158.8" y1="25.5" x2="135.0" y2="51.8" stroke="#7a38d8" stroke-opacity=".82" stroke-width="1.4"/><line x1="158.8" y1="25.5" x2="216.2" y2="51.8" stroke="#7a38d8" stroke-opacity=".82" stroke-width="1.4"/><line x1="158.8" y1="25.5" x2="158.8" y2="78.0" stroke="#7a38d8" stroke-opacity=".82" stroke-width="1.4"/><line x1="158.8" y1="25.5" x2="112.5" y2="102.5" stroke="#7a38d8" stroke-opacity=".82" stroke-width="1.4"/><line x1="158.8" y1="25.5" x2="227.5" y2="102.5" stroke="#7a38d8" stroke-opacity=".82" stroke-width="1.4"/><line x1="158.8" y1="25.5" x2="170.0" y2="139.5" stroke="#7a38d8" stroke-opacity=".82" stroke-width="1.4"/><line x1="158.8" y1="25.5" x2="123.8" y2="150.5" stroke="#7a38d8" stroke-opacity=".82" stroke-width="1.4"/><line x1="158.8" y1="25.5" x2="192.5" y2="186.8" stroke="#7a38d8" stroke-opacity=".82" stroke-width="1.4"/><line x1="158.8" y1="25.5" x2="146.2" y2="198.0" stroke="#7a38d8" stroke-opacity=".82" stroke-width="1.4"/><line x1="135.0" y1="51.8" x2="216.2" y2="51.8" stroke="#7a38d8" stroke-opacity=".82" stroke-width="1.4"/><line x1="135.0" y1="51.8" x2="158.8" y2="78.0" stroke="#7a38d8" stroke-opacity=".82" stroke-width="1.4"/><line x1="135.0" y1="51.8" x2="112.5" y2="102.5" stroke="#7a38d8" stroke-opacity=".82" stroke-width="1.4"/><line x1="135.0" y1="51.8" x2="227.5" y2="102.5" stroke="#7a38d8" stroke-opacity=".82" stroke-width="1.4"/><line x1="135.0" y1="51.8" x2="170.0" y2="139.5" stroke="#7a38d8" stroke-opacity=".82" stroke-width="1.4"/><line x1="135.0" y1="51.8" x2="123.8" y2="150.5" stroke="#7a38d8" stroke-opacity=".82" stroke-width="1.4"/><line x1="135.0" y1="51.8" x2="192.5" y2="186.8" stroke="#7a38d8" stroke-opacity=".82" stroke-width="1.4"/><line x1="135.0" y1="51.8" x2="146.2" y2="198.0" stroke="#7a38d8" stroke-opacity=".82" stroke-width="1.4"/><line x1="216.2" y1="51.8" x2="158.8" y2="78.0" stroke="#7a38d8" stroke-opacity=".82" stroke-width="1.4"/><line x1="216.2" y1="51.8" x2="112.5" y2="102.5" stroke="#7a38d8" stroke-opacity=".82" stroke-width="1.4"/><line x1="216.2" y1="51.8" x2="227.5" y2="102.5" stroke="#7a38d8" stroke-opacity=".82" stroke-width="1.4"/><line x1="216.2" y1="51.8" x2="170.0" y2="139.5" stroke="#7a38d8" stroke-opacity=".82" stroke-width="1.4"/><line x1="216.2" y1="51.8" x2="123.8" y2="150.5" stroke="#7a38d8" stroke-opacity=".82" stroke-width="1.4"/><line x1="216.2" y1="51.8" x2="192.5" y2="186.8" stroke="#7a38d8" stroke-opacity=".82" stroke-width="1.4"/><line x1="216.2" y1="51.8" x2="146.2" y2="198.0" stroke="#7a38d8" stroke-opacity=".82" stroke-width="1.4"/><line x1="158.8" y1="78.0" x2="112.5" y2="102.5" stroke="#7a38d8" stroke-opacity=".82" stroke-width="1.4"/><line x1="158.8" y1="78.0" x2="227.5" y2="102.5" stroke="#7a38d8" stroke-opacity=".82" stroke-width="1.4"/><line x1="158.8" y1="78.0" x2="170.0" y2="139.5" stroke="#7a38d8" stroke-opacity=".82" stroke-width="1.4"/><line x1="158.8" y1="78.0" x2="123.8" y2="150.5" stroke="#7a38d8" stroke-opacity=".82" stroke-width="1.4"/><line x1="158.8" y1="78.0" x2="192.5" y2="186.8" stroke="#7a38d8" stroke-opacity=".82" stroke-width="1.4"/><line x1="158.8" y1="78.0" x2="146.2" y2="198.0" stroke="#7a38d8" stroke-opacity=".82" stroke-width="1.4"/><line x1="112.5" y1="102.5" x2="227.5" y2="102.5" stroke="#7a38d8" stroke-opacity=".82" stroke-width="1.4"/><line x1="112.5" y1="102.5" x2="170.0" y2="139.5" stroke="#7a38d8" stroke-opacity=".82" stroke-width="1.4"/><line x1="112.5" y1="102.5" x2="123.8" y2="150.5" stroke="#7a38d8" stroke-opacity=".82" stroke-width="1.4"/><line x1="112.5" y1="102.5" x2="192.5" y2="186.8" stroke="#7a38d8" stroke-opacity=".82" stroke-width="1.4"/><line x1="112.5" y1="102.5" x2="146.2" y2="198.0" stroke="#7a38d8" stroke-opacity=".82" stroke-width="1.4"/><line x1="227.5" y1="102.5" x2="170.0" y2="139.5" stroke="#7a38d8" stroke-opacity=".82" stroke-width="1.4"/><line x1="227.5" y1="102.5" x2="123.8" y2="150.5" stroke="#7a38d8" stroke-opacity=".82" stroke-width="1.4"/><line x1="227.5" y1="102.5" x2="192.5" y2="186.8" stroke="#7a38d8" stroke-opacity=".82" stroke-width="1.4"/><line x1="227.5" y1="102.5" x2="146.2" y2="198.0" stroke="#7a38d8" stroke-opacity=".82" stroke-width="1.4"/><line x1="170.0" y1="139.5" x2="123.8" y2="150.5" stroke="#7a38d8" stroke-opacity=".82" stroke-width="1.4"/><line x1="170.0" y1="139.5" x2="192.5" y2="186.8" stroke="#7a38d8" stroke-opacity=".82" stroke-width="1.4"/><line x1="170.0" y1="139.5" x2="146.2" y2="198.0" stroke="#7a38d8" stroke-opacity=".82" stroke-width="1.4"/><line x1="123.8" y1="150.5" x2="192.5" y2="186.8" stroke="#7a38d8" stroke-opacity=".82" stroke-width="1.4"/><line x1="123.8" y1="150.5" x2="146.2" y2="198.0" stroke="#7a38d8" stroke-opacity=".82" stroke-width="1.4"/><line x1="192.5" y1="186.8" x2="146.2" y2="198.0" stroke="#7a38d8" stroke-opacity=".82" stroke-width="1.4"/><circle cx="158.8" cy="25.5" r="6.5" fill="#bc9aed" fill-opacity=".92" stroke="#8a4fe0" stroke-width="1.5"/><circle cx="135.0" cy="51.8" r="6.5" fill="#bc9aed" fill-opacity=".92" stroke="#8a4fe0" stroke-width="1.5"/><circle cx="216.2" cy="51.8" r="6.5" fill="#bc9aed" fill-opacity=".92" stroke="#8a4fe0" stroke-width="1.5"/><circle cx="158.8" cy="78.0" r="6.5" fill="#bc9aed" fill-opacity=".92" stroke="#8a4fe0" stroke-width="1.5"/><circle cx="112.5" cy="102.5" r="6.5" fill="#bc9aed" fill-opacity=".92" stroke="#8a4fe0" stroke-width="1.5"/><circle cx="227.5" cy="102.5" r="6.5" fill="#bc9aed" fill-opacity=".92" stroke="#8a4fe0" stroke-width="1.5"/><circle cx="170.0" cy="139.5" r="6.5" fill="#bc9aed" fill-opacity=".92" stroke="#8a4fe0" stroke-width="1.5"/><circle cx="123.8" cy="150.5" r="6.5" fill="#bc9aed" fill-opacity=".92" stroke="#8a4fe0" stroke-width="1.5"/><circle cx="192.5" cy="186.8" r="6.5" fill="#bc9aed" fill-opacity=".92" stroke="#8a4fe0" stroke-width="1.5"/><circle cx="146.2" cy="198.0" r="6.5" fill="#bc9aed" fill-opacity=".92" stroke="#8a4fe0" stroke-width="1.5"/><rect x="13" y="12.4" width="34.4" height="70" rx="4.5" fill="#000" fill-opacity=".22"/><rect x="15" y="14.4" width="30.4" height="66" rx="2.5" fill="#fff"/><rect x="15" y="47" width="30.4" height="1" fill="#ccc"/><path d="M24.200 30.400 H38 M31.100 23.500 V37.300" stroke="#111" stroke-width="2.200"/><path d="M24.200 64.700 H38" stroke="#111" stroke-width="2.100"/><rect x="216" y="208.900" width="126" height="18.100" fill="#fff" fill-opacity=".8"/><rect x="221" y="213.300" width="13.800" height="4.600" fill="#4678d0"/><rect x="221" y="217.900" width="13.800" height="4.500" fill="#ffd500"/><text x="238.300" y="222.400" font-size="12.200" fill="#0078a8">Leaflet</text><text x="278" y="222" font-size="12.200" fill="#444">|</text><text x="285.600" y="222.400" font-size="12.200" fill="#0078a8">Icon Map</text></svg>

<!-- REPORT TABLES -->
<div class="abs panel" style="left:431px;top:551px;width:687px;height:374px"></div>
<div class="abs" style="left:437.2px;top:553.17px;font-size:14.8px;font-weight:700;color:#111;line-height:19px;letter-spacing:0px;white-space:nowrap">Volume</div>
<div class="abs" style="left:438px;top:575.6px;width:656.5px;height:344px;overflow:hidden;background:#f5f5f5">
<div class="abs" style="left:0;top:37.1px;width:656.5px;height:1.4px;background:#8040d4"></div>
<div class="abs" style="left:0;top:38.40px;width:656.5px;height:22.5px;background:#f5f5f5"></div>
<div class="abs" style="left:0;top:60.90px;width:656.5px;height:22.5px;background:#e4e4e4"></div>
<div class="abs" style="left:0;top:83.40px;width:656.5px;height:22.5px;background:#f5f5f5"></div>
<div class="abs" style="left:0;top:105.90px;width:656.5px;height:22.5px;background:#e4e4e4"></div>
<div class="abs" style="left:0;top:128.40px;width:656.5px;height:22.5px;background:#f5f5f5"></div>
<div class="abs" style="left:0;top:150.90px;width:656.5px;height:22.5px;background:#e4e4e4"></div>
<div class="abs" style="left:0;top:173.40px;width:656.5px;height:22.5px;background:#f5f5f5"></div>
<div class="abs" style="left:0;top:195.90px;width:656.5px;height:22.5px;background:#e4e4e4"></div>
<div class="abs" style="left:0;top:218.40px;width:656.5px;height:22.5px;background:#f5f5f5"></div>
<div class="abs" style="left:0;top:240.90px;width:656.5px;height:22.5px;background:#e4e4e4"></div>
<div class="abs" style="left:0;top:263.40px;width:656.5px;height:22.5px;background:#f5f5f5"></div>
<div class="abs" style="left:0;top:285.90px;width:656.5px;height:22.5px;background:#e4e4e4"></div>
<div class="abs" style="left:0;top:308.40px;width:656.5px;height:22.5px;background:#f5f5f5"></div>
<div class="abs" style="left:0;top:330.90px;width:656.5px;height:22.5px;background:#e4e4e4"></div>
<div class="abs" style="left:462.5px;top:38.39999999999998px;width:1px;height:400px;background:rgba(255,255,255,.35)"></div>
<div class="abs" style="left:541.5px;top:38.39999999999998px;width:1px;height:400px;background:rgba(255,255,255,.35)"></div>
</div>
<div class="abs" style="left:444.3px;top:578.77px;font-size:17.4px;font-weight:400;color:#333;line-height:23px;letter-spacing:0px;white-space:nowrap">Demand</div>
<div class="abs" style="right:945.2px;top:578.77px;font-size:17.4px;font-weight:400;color:#333;line-height:23px;letter-spacing:0px;white-space:nowrap"># Transit</div>
<div class="abs" style="right:831.2px;top:578.77px;font-size:17.4px;font-weight:400;color:#333;line-height:23px;letter-spacing:0.28px;white-space:nowrap">Demand Qty</div>
<div class="abs" style="left:438px;top:575.6px;width:656.5px;height:344px;overflow:hidden">
<div class="abs" style="left:6.4px;top:41.18px;font-size:14.5px;line-height:19px;color:#252525;letter-spacing:.1px;white-space:nowrap">Berlin-Bremen-X2B-Large-1-20:00-9</div>
<div class="abs" style="right:118.7px;top:41.18px;font-size:14.5px;line-height:19px;color:#252525;white-space:nowrap">0</div>
<div class="abs" style="right:5.7px;top:41.18px;font-size:14.5px;line-height:19px;color:#252525;white-space:nowrap">64</div>
<div class="abs" style="left:6.4px;top:63.68px;font-size:14.5px;line-height:19px;color:#252525;letter-spacing:.1px;white-space:nowrap">Berlin-Bremen-X2B-Large-2-20:00-9</div>
<div class="abs" style="right:118.7px;top:63.68px;font-size:14.5px;line-height:19px;color:#252525;white-space:nowrap">0</div>
<div class="abs" style="right:5.7px;top:63.68px;font-size:14.5px;line-height:19px;color:#252525;white-space:nowrap">51</div>
<div class="abs" style="left:6.4px;top:86.18px;font-size:14.5px;line-height:19px;color:#252525;letter-spacing:.1px;white-space:nowrap">Berlin-Bremen-X2B-Small-1-20:00-9</div>
<div class="abs" style="right:118.7px;top:86.18px;font-size:14.5px;line-height:19px;color:#252525;white-space:nowrap">0</div>
<div class="abs" style="right:5.7px;top:86.18px;font-size:14.5px;line-height:19px;color:#252525;white-space:nowrap">256</div>
<div class="abs" style="left:6.4px;top:108.68px;font-size:14.5px;line-height:19px;color:#252525;letter-spacing:.1px;white-space:nowrap">Berlin-Bremen-X2B-Small-2-20:00-9</div>
<div class="abs" style="right:118.7px;top:108.68px;font-size:14.5px;line-height:19px;color:#252525;white-space:nowrap">0</div>
<div class="abs" style="right:5.7px;top:108.68px;font-size:14.5px;line-height:19px;color:#252525;white-space:nowrap">205</div>
<div class="abs" style="left:6.4px;top:131.18px;font-size:14.5px;line-height:19px;color:#252525;letter-spacing:.1px;white-space:nowrap">Berlin-Bremen-X2C-Standard-1-20:00-9</div>
<div class="abs" style="right:118.7px;top:131.18px;font-size:14.5px;line-height:19px;color:#252525;white-space:nowrap">0</div>
<div class="abs" style="right:5.7px;top:131.18px;font-size:14.5px;line-height:19px;color:#252525;white-space:nowrap">630</div>
<div class="abs" style="left:6.4px;top:153.68px;font-size:14.5px;line-height:19px;color:#252525;letter-spacing:.1px;white-space:nowrap">Berlin-Bremen-X2C-Standard-2-20:00-9</div>
<div class="abs" style="right:118.7px;top:153.68px;font-size:14.5px;line-height:19px;color:#252525;white-space:nowrap">0</div>
<div class="abs" style="right:5.7px;top:153.68px;font-size:14.5px;line-height:19px;color:#252525;white-space:nowrap">504</div>
<div class="abs" style="left:6.4px;top:176.18px;font-size:14.5px;line-height:19px;color:#252525;letter-spacing:.1px;white-space:nowrap">Berlin-Dresden-X2B-Large-1-20:00-9</div>
<div class="abs" style="right:118.7px;top:176.18px;font-size:14.5px;line-height:19px;color:#252525;white-space:nowrap">0</div>
<div class="abs" style="right:5.7px;top:176.18px;font-size:14.5px;line-height:19px;color:#252525;white-space:nowrap">61</div>
<div class="abs" style="left:6.4px;top:198.68px;font-size:14.5px;line-height:19px;color:#252525;letter-spacing:.1px;white-space:nowrap">Berlin-Dresden-X2B-Large-2-20:00-9</div>
<div class="abs" style="right:118.7px;top:198.68px;font-size:14.5px;line-height:19px;color:#252525;white-space:nowrap">0</div>
<div class="abs" style="right:5.7px;top:198.68px;font-size:14.5px;line-height:19px;color:#252525;white-space:nowrap">49</div>
<div class="abs" style="left:6.4px;top:221.18px;font-size:14.5px;line-height:19px;color:#252525;letter-spacing:.1px;white-space:nowrap">Berlin-Dresden-X2B-Small-1-20:00-9</div>
<div class="abs" style="right:118.7px;top:221.18px;font-size:14.5px;line-height:19px;color:#252525;white-space:nowrap">0</div>
<div class="abs" style="right:5.7px;top:221.18px;font-size:14.5px;line-height:19px;color:#252525;white-space:nowrap">246</div>
<div class="abs" style="left:6.4px;top:243.68px;font-size:14.5px;line-height:19px;color:#252525;letter-spacing:.1px;white-space:nowrap">Berlin-Dresden-X2B-Small-2-20:00-9</div>
<div class="abs" style="right:118.7px;top:243.68px;font-size:14.5px;line-height:19px;color:#252525;white-space:nowrap">0</div>
<div class="abs" style="right:5.7px;top:243.68px;font-size:14.5px;line-height:19px;color:#252525;white-space:nowrap">197</div>
<div class="abs" style="left:6.4px;top:266.18px;font-size:14.5px;line-height:19px;color:#252525;letter-spacing:.1px;white-space:nowrap">Berlin-Dresden-X2C-Standard-1-20:00-9</div>
<div class="abs" style="right:118.7px;top:266.18px;font-size:14.5px;line-height:19px;color:#252525;white-space:nowrap">0</div>
<div class="abs" style="right:5.7px;top:266.18px;font-size:14.5px;line-height:19px;color:#252525;white-space:nowrap">618</div>
<div class="abs" style="left:6.4px;top:288.68px;font-size:14.5px;line-height:19px;color:#252525;letter-spacing:.1px;white-space:nowrap">Berlin-Dresden-X2C-Standard-2-20:00-9</div>
<div class="abs" style="right:118.7px;top:288.68px;font-size:14.5px;line-height:19px;color:#252525;white-space:nowrap">0</div>
<div class="abs" style="right:5.7px;top:288.68px;font-size:14.5px;line-height:19px;color:#252525;white-space:nowrap">495</div>
<div class="abs" style="left:6.4px;top:311.18px;font-size:14.5px;line-height:19px;color:#252525;letter-spacing:.1px;white-space:nowrap">Berlin-Hagen-X2B-Large-1-20:00-33</div>
<div class="abs" style="right:118.7px;top:311.18px;font-size:14.5px;line-height:19px;color:#252525;white-space:nowrap">0</div>
<div class="abs" style="right:5.7px;top:311.18px;font-size:14.5px;line-height:19px;color:#252525;white-space:nowrap">228</div>
<div class="abs" style="left:6.4px;top:333.68px;font-size:14.5px;line-height:19px;color:#252525;letter-spacing:.1px;white-space:nowrap">Berlin-Hagen-X2B-Large-2-20:00-33</div>
<div class="abs" style="right:118.7px;top:333.68px;font-size:14.5px;line-height:19px;color:#252525;white-space:nowrap">0</div>
<div class="abs" style="right:5.7px;top:333.68px;font-size:14.5px;line-height:19px;color:#252525;white-space:nowrap">182</div>
</div>
<div class="abs" style="left:1102.7px;top:576.900px;width:8.2px;height:9px;border-radius:50%;background:#a8a8a8"></div>
<div class="abs panel" style="left:1154px;top:549px;width:682.5px;height:375.5px"></div>
<div class="abs" style="left:1159.8px;top:550.87px;font-size:14.8px;font-weight:700;color:#111;line-height:19px;letter-spacing:0px;white-space:nowrap">Container utilization</div>
<div class="abs" style="left:1161px;top:574px;width:649.5px;height:344.5px;overflow:hidden;background:#f5f5f5">
<div class="abs" style="left:0;top:36.0px;width:649.5px;height:1.4px;background:#8040d4"></div>
<div class="abs" style="left:0;top:37.60px;width:649.5px;height:22.5px;background:#f5f5f5"></div>
<div class="abs" style="left:0;top:60.10px;width:649.5px;height:22.5px;background:#e4e4e4"></div>
<div class="abs" style="left:0;top:82.60px;width:649.5px;height:22.5px;background:#f5f5f5"></div>
<div class="abs" style="left:0;top:105.10px;width:649.5px;height:22.5px;background:#e4e4e4"></div>
<div class="abs" style="left:0;top:127.60px;width:649.5px;height:22.5px;background:#f5f5f5"></div>
<div class="abs" style="left:0;top:150.10px;width:649.5px;height:22.5px;background:#e4e4e4"></div>
<div class="abs" style="left:0;top:172.60px;width:649.5px;height:22.5px;background:#f5f5f5"></div>
<div class="abs" style="left:0;top:195.10px;width:649.5px;height:22.5px;background:#e4e4e4"></div>
<div class="abs" style="left:0;top:217.60px;width:649.5px;height:22.5px;background:#f5f5f5"></div>
<div class="abs" style="left:0;top:240.10px;width:649.5px;height:22.5px;background:#e4e4e4"></div>
<div class="abs" style="left:0;top:262.60px;width:649.5px;height:22.5px;background:#f5f5f5"></div>
<div class="abs" style="left:0;top:285.10px;width:649.5px;height:22.5px;background:#e4e4e4"></div>
<div class="abs" style="left:0;top:307.60px;width:649.5px;height:22.5px;background:#f5f5f5"></div>
<div class="abs" style="left:0;top:330.10px;width:649.5px;height:22.5px;background:#e4e4e4"></div>
<div class="abs" style="left:475.5px;top:37.60000000000002px;width:1px;height:400px;background:rgba(255,255,255,.35)"></div>
</div>
<div class="abs" style="left:1166.8px;top:576.74px;font-size:17.5px;font-weight:400;color:#333;line-height:23px;letter-spacing:0px;white-space:nowrap">Container Route</div>
<div class="abs" style="right:114.40000000000009px;top:576.60px;font-size:17.9px;font-weight:400;color:#333;line-height:23px;letter-spacing:0px;white-space:nowrap">Container Utilization</div>
<div class="abs" style="left:1161px;top:574px;width:649.5px;height:344.5px;overflow:hidden">
<div class="abs" style="left:6px;top:40.78px;font-size:14.5px;line-height:19px;color:#252525;letter-spacing:.08px;white-space:nowrap">Berlin-Bremen-1-22:00:00-Truck M Own</div>
<div class="abs" style="right:5.1px;top:40.78px;font-size:14.5px;line-height:19px;color:#252525;white-space:nowrap">28%</div>
<div class="abs" style="left:6px;top:63.28px;font-size:14.5px;line-height:19px;color:#252525;letter-spacing:.08px;white-space:nowrap">Berlin-Bremen-2-23:00:00-Truck M Own</div>
<div class="abs" style="right:5.1px;top:63.28px;font-size:14.5px;line-height:19px;color:#252525;white-space:nowrap">22%</div>
<div class="abs" style="left:6px;top:85.78px;font-size:14.5px;line-height:19px;color:#252525;letter-spacing:.08px;white-space:nowrap">Berlin-Dresden-2-01:00:00-Truck M Own</div>
<div class="abs" style="right:5.1px;top:85.78px;font-size:14.5px;line-height:19px;color:#252525;white-space:nowrap">27%</div>
<div class="abs" style="left:6px;top:108.28px;font-size:14.5px;line-height:19px;color:#252525;letter-spacing:.08px;white-space:nowrap">Berlin-Dresden-3-01:00:00-Truck L Own</div>
<div class="abs" style="right:5.1px;top:108.28px;font-size:14.5px;line-height:19px;color:#252525;white-space:nowrap">11%</div>
<div class="abs" style="left:6px;top:130.78px;font-size:14.5px;line-height:19px;color:#252525;letter-spacing:.08px;white-space:nowrap">Berlin-Hagen-1-22:00:00-Truck M Own</div>
<div class="abs" style="right:5.1px;top:130.78px;font-size:14.5px;line-height:19px;color:#252525;white-space:nowrap">77%</div>
<div class="abs" style="left:6px;top:153.28px;font-size:14.5px;line-height:19px;color:#252525;letter-spacing:.08px;white-space:nowrap">Berlin-Hagen-2-22:00:00-Truck M Own</div>
<div class="abs" style="right:5.1px;top:153.28px;font-size:14.5px;line-height:19px;color:#252525;white-space:nowrap">99%</div>
<div class="abs" style="left:6px;top:175.78px;font-size:14.5px;line-height:19px;color:#252525;letter-spacing:.08px;white-space:nowrap">Berlin-Hagen-3-04:00:00-Truck M Own</div>
<div class="abs" style="right:5.1px;top:175.78px;font-size:14.5px;line-height:19px;color:#252525;white-space:nowrap">22%</div>
<div class="abs" style="left:6px;top:198.28px;font-size:14.5px;line-height:19px;color:#252525;letter-spacing:.08px;white-space:nowrap">Berlin-Hamburg-1-22:00:00-Truck M Own</div>
<div class="abs" style="right:5.1px;top:198.28px;font-size:14.5px;line-height:19px;color:#252525;white-space:nowrap">70%</div>
<div class="abs" style="left:6px;top:220.78px;font-size:14.5px;line-height:19px;color:#252525;letter-spacing:.08px;white-space:nowrap">Berlin-Hamburg-3-01:00:00-Truck M Own</div>
<div class="abs" style="right:5.1px;top:220.78px;font-size:14.5px;line-height:19px;color:#252525;white-space:nowrap">56%</div>
<div class="abs" style="left:6px;top:243.28px;font-size:14.5px;line-height:19px;color:#252525;letter-spacing:.08px;white-space:nowrap">Berlin-Hildesheim-1-23:00:00-Truck M Own</div>
<div class="abs" style="right:5.1px;top:243.28px;font-size:14.5px;line-height:19px;color:#252525;white-space:nowrap">51%</div>
<div class="abs" style="left:6px;top:265.78px;font-size:14.5px;line-height:19px;color:#252525;letter-spacing:.08px;white-space:nowrap">Berlin-Hildesheim-3-01:00:00-Truck M Own</div>
<div class="abs" style="right:5.1px;top:265.78px;font-size:14.5px;line-height:19px;color:#252525;white-space:nowrap">41%</div>
<div class="abs" style="left:6px;top:288.28px;font-size:14.5px;line-height:19px;color:#252525;letter-spacing:.08px;white-space:nowrap">Berlin-Kaiserslautern-2-03:00:00-Truck M Own</div>
<div class="abs" style="right:5.1px;top:288.28px;font-size:14.5px;line-height:19px;color:#252525;white-space:nowrap">24%</div>
<div class="abs" style="left:6px;top:310.78px;font-size:14.5px;line-height:19px;color:#252525;letter-spacing:.08px;white-space:nowrap">Berlin-Kaiserslautern-3-04:00:00-Truck M Own</div>
<div class="abs" style="right:5.1px;top:310.78px;font-size:14.5px;line-height:19px;color:#252525;white-space:nowrap">30%</div>
<div class="abs" style="left:6px;top:333.28px;font-size:14.5px;line-height:19px;color:#252525;letter-spacing:.08px;white-space:nowrap">Berlin-Munich-1-22:00:00-Truck L Own</div>
<div class="abs" style="right:5.1px;top:333.28px;font-size:14.5px;line-height:19px;color:#252525;white-space:nowrap">2%</div>
</div>
<div class="abs" style="left:1822px;top:575px;width:8px;height:22.6px;border-radius:4px;background:#858585"></div>
<svg class="abs" style="left:418.9px;top:927.9px" width="28" height="28" viewBox="0 0 28 28"><circle cx="14" cy="14" r="10.5" fill="none" stroke="#161616" stroke-width="3.1"/><path d="M21.200 14 H10.500" fill="none" stroke="#161616" stroke-width="3.400"/><path d="M14.200 7.800 L8 14 L14.200 20.200" fill="none" stroke="#161616" stroke-width="3.300" stroke-linejoin="miter"/></svg>

</body>
</html>
